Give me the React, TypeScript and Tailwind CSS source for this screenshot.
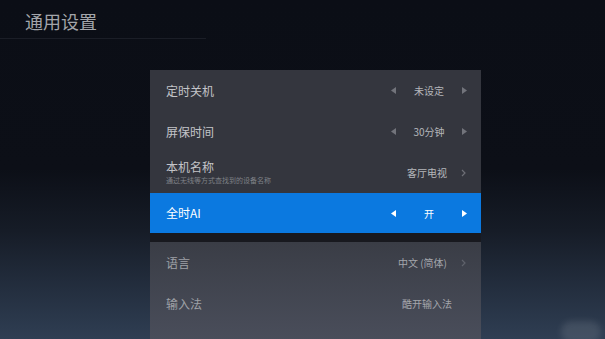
import React from 'react';

const font = { fontFamily: '"Noto Sans CJK SC", "Noto Sans", sans-serif' };

const Tri: React.FC<{ dir: 'l' | 'r'; color: string }> = ({ dir, color }) => (
  <svg width="5" height="7" viewBox="0 0 5 7">
    {dir === 'l' ? <polygon points="5,0 0,3.5 5,7" fill={color} /> : <polygon points="0,0 5,3.5 0,7" fill={color} />}
  </svg>
);

const Chevron: React.FC<{ color: string }> = ({ color }) => (
  <svg width="5" height="8" viewBox="0 0 5 8">
    <polyline points="1,1 4,4 1,7" fill="none" stroke={color} strokeWidth="1.2" />
  </svg>
);

const ArrowValue: React.FC<{ value: string; active?: boolean }> = ({ value, active }) => (
  <div className="mr-[14px] flex w-[76px] items-center justify-between">
    <Tri dir="l" color={active ? '#ffffff' : '#72747b'} />
    <span className={active ? 'text-[10px] text-white' : 'text-[10px] text-[#b4b6bb]'}>{value}</span>
    <Tri dir="r" color={active ? '#ffffff' : '#72747b'} />
  </div>
);

const App: React.FC = () => {
  return (
    <div
      className="relative h-[339px] w-[605px] overflow-hidden bg-[linear-gradient(180deg,#0b0e16_0%,#0c0f17_50%,#161c27_68%,#2f3e53_100%)]"
      style={font}
    >
      <div className="h-[39px] w-[206px] border-b border-[#1b1e27] pl-[25px] pt-[7px]">
        <h1 className="text-[18px] leading-[28px] text-[#a3a5aa]">通用设置</h1>
      </div>

      <div className="ml-[150px] mt-[31px] w-[331px]">
        <div className="bg-[#34363e]">
          <div className="flex h-[41px] items-center justify-between pl-[16px]">
            <span className="text-[12px] text-[#c3c4c8]">定时关机</span>
            <ArrowValue value="未设定" />
          </div>
          <div className="flex h-[41px] items-center justify-between pl-[16px]">
            <span className="text-[12px] text-[#c3c4c8]">屏保时间</span>
            <ArrowValue value="30分钟" />
          </div>
          <div className="flex h-[41px] items-center justify-between pl-[16px]">
            <div className="flex flex-col pb-[2px]">
              <span className="text-[12px] leading-[15px] text-[#c3c4c8]">本机名称</span>
              <span className="mt-[1px] text-[7px] leading-[10px] text-[#7f8187]">通过无线等方式查找到的设备名称</span>
            </div>
            <div className="mr-[15px] flex items-center gap-[14px]">
              <span className="text-[10px] text-[#b4b6bb]">客厅电视</span>
              <Chevron color="#6d6f76" />
            </div>
          </div>
        </div>

        <div className="flex h-[40px] items-center justify-between bg-[#0b79e0] pl-[16px]">
          <span className="text-[12px] text-white">全时AI</span>
          <ArrowValue value="开" active />
        </div>

        <div className="h-[9px] bg-[#18191f]" />

        <div className="h-[100px] bg-[linear-gradient(180deg,#3a3d46_0%,#4a4e5b_100%)]">
          <div className="flex h-[41px] items-center justify-between pl-[16px]">
            <span className="text-[12px] text-[#9fa1a7]">语言</span>
            <div className="mr-[15px] flex items-center gap-[14px]">
              <span className="text-[10px] text-[#a4a6ac]">中文 (简体)</span>
              <Chevron color="#5f626b" />
            </div>
          </div>
          <div className="flex h-[41px] items-center justify-between pl-[16px]">
            <span className="text-[12px] text-[#9fa1a7]">输入法</span>
            <span className="mr-[29px] text-[10px] text-[#a4a6ac]">酷开输入法</span>
          </div>
        </div>
      </div>

      <div className="absolute bottom-[-4px] right-[4px] h-[22px] w-[40px] rounded-full bg-white/10 blur-[3px]" />
    </div>
  );
};

export default App;
